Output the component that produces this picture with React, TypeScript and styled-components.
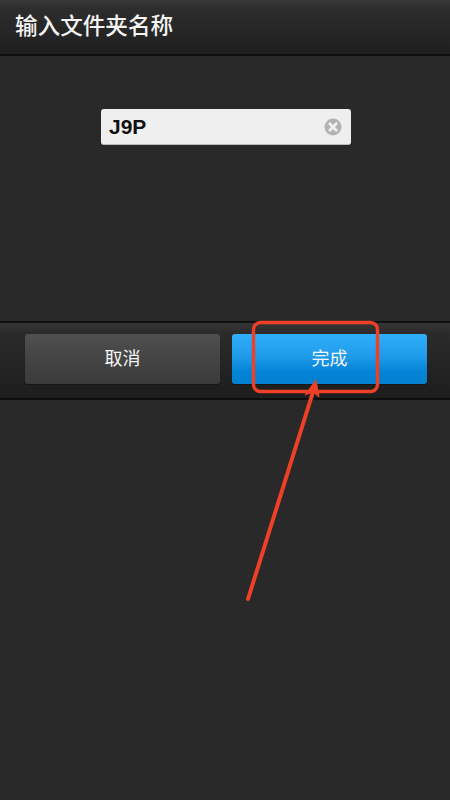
import React from "react";
import styled, { createGlobalStyle } from "styled-components";

const Global = createGlobalStyle`
  html, body { margin: 0; padding: 0; background: #292929; }
  body { font-family: "Noto Sans CJK SC", "Liberation Sans", sans-serif; }
`;

const Screen = styled.div`
  position: relative;
  width: 450px;
  height: 800px;
  overflow: hidden;
  background: #292929;
  display: flex;
  flex-direction: column;
`;

const Header = styled.header`
  box-sizing: border-box;
  height: 56px;
  padding: 0 0 5px 15px;
  display: flex;
  align-items: center;
  background: linear-gradient(#3a3a3a 0, #2d2d2d 8px, #1f1f1f 100%);
  border-bottom: 2px solid #0e0e0e;
`;

const Title = styled.h1`
  margin: 0;
  color: #f4f4f4;
  font-size: 22.6px;
  font-weight: 500;
  line-height: 30px;
`;

const Content = styled.main`
  box-sizing: border-box;
  height: 265px;
  padding-top: 53px;
  display: flex;
  justify-content: center;
`;

const Field = styled.div`
  box-sizing: border-box;
  width: 250px;
  height: 36px;
  margin-left: 2px;
  padding: 0 9px 0 8px;
  display: flex;
  align-items: center;
  justify-content: space-between;
  background: #efefef;
  border-radius: 3px;
  border-bottom: 1px solid #bdbdbd;
`;

const FieldValue = styled.span`
  color: #111;
  font-family: "Liberation Sans", Arial, sans-serif;
  font-size: 21px;
  font-weight: 700;
`;

const ActionBar = styled.div`
  box-sizing: border-box;
  height: 79px;
  padding: 11px 23px 0 25px;
  display: flex;
  gap: 12px;
  background: linear-gradient(#363636 0, #2b2b2b 10px, #1d1d1d 100%);
  border-top: 2px solid #111;
  border-bottom: 2px solid #0e0e0e;
`;

const ActionButton = styled.button<{ $primary?: boolean }>`
  flex: 1;
  height: 50px;
  padding: 0 0 4px;
  border: 0;
  border-radius: 3px;
  color: #f6f6f6;
  font-family: inherit;
  font-size: 18px;
  font-weight: 400;
  background: ${(p) =>
    p.$primary
      ? "linear-gradient(#30aefa 0, #1f9bea 45%, #0384d6 75%, #0481d0 100%)"
      : "linear-gradient(#4f4f4f, #3a3a3a)"};
  box-shadow: 0 1px 1px rgba(0, 0, 0, 0.35);
`;

const Annotation = styled.svg`
  position: absolute;
  inset: 0;
  pointer-events: none;
`;

function ClearIcon() {
  return (
    <svg width="18" height="18" viewBox="0 0 18 18">
      <circle cx="9" cy="9" r="8.5" fill="#b3b3b3" />
      <path d="M5.8 5.8 L12.2 12.2 M12.2 5.8 L5.8 12.2" stroke="#f1f1f1" strokeWidth="2.8" strokeLinecap="round" />
    </svg>
  );
}

export default function App() {
  return (
    <Screen>
      <Global />
      <Header>
        <Title>输入文件夹名称</Title>
      </Header>
      <Content>
        <Field>
          <FieldValue>J9P</FieldValue>
          <ClearIcon />
        </Field>
      </Content>
      <ActionBar>
        <ActionButton>取消</ActionButton>
        <ActionButton $primary>完成</ActionButton>
      </ActionBar>
      <Annotation width="450" height="800" viewBox="0 0 450 800">
        <rect x="253.5" y="322.5" width="124" height="69" rx="7" fill="none" stroke="#ee3f27" strokeWidth="3.4" />
        <path d="M248 599 L313 392" stroke="#ee3f27" strokeWidth="4" strokeLinecap="round" fill="none" />
        <path d="M316 380 L305 395 L313 392 L319 397 Z" fill="#ee3f27" stroke="#ee3f27" strokeWidth="1" />
      </Annotation>
    </Screen>
  );
}
